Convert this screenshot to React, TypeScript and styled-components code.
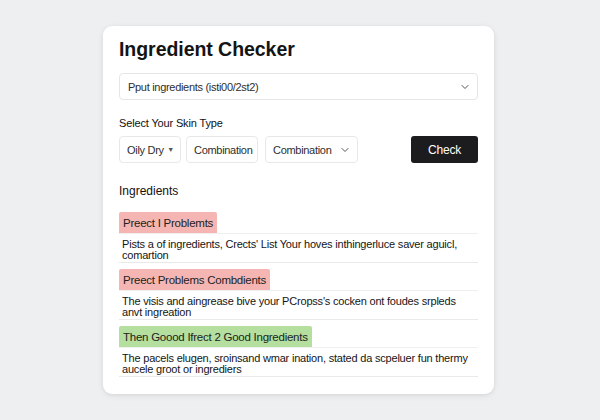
import React from 'react';
import styled, { createGlobalStyle } from 'styled-components';
import { ChevronDown } from 'lucide-react';

const GlobalStyle = createGlobalStyle`
  html, body {
    margin: 0;
    padding: 0;
    background: #eeeff0;
    font-family: "Liberation Sans", Arial, sans-serif;
    color: #1a1a1a;
  }
`;

const Page = styled.div`
  width: 600px;
  height: 420px;
  display: flex;
  justify-content: center;
  align-items: flex-start;
  padding-top: 26px;
  box-sizing: border-box;
`;

const Card = styled.div`
  width: 391px;
  margin-left: -3px;
  box-sizing: border-box;
  background: #fff;
  border-radius: 9px;
  padding: 11px 16px 17px;
  box-shadow: 0 1px 4px rgba(0, 0, 0, 0.08), 0 2px 10px rgba(0, 0, 0, 0.04);
  display: flex;
  flex-direction: column;
`;

const Title = styled.h1`
  margin: 0;
  font-size: 19.5px;
  line-height: 24px;
  font-weight: 700;
  color: #141414;
  letter-spacing: -0.05px;
`;

const InputSelect = styled.div`
  margin-top: 12px;
  height: 25px;
  border: 1px solid #e6e6e6;
  border-radius: 4px;
  display: flex;
  align-items: center;
  justify-content: space-between;
  padding: 0 6px 0 8px;
  font-size: 11px;
  letter-spacing: -0.3px;
  color: #2e2e2e;
`;

const Label = styled.div`
  margin-top: 16px;
  font-size: 11px;
  line-height: 14px;
  letter-spacing: -0.15px;
  color: #111;
`;

const Row = styled.div`
  margin-top: 6px;
  display: flex;
  align-items: center;
  gap: 5px;
`;

const SkinBox = styled.div<{ $w: number; $gapAfter?: number; $padR?: number }>`
  flex: 0 0 auto;
  width: ${(p) => p.$w}px;
  height: 27px;
  box-sizing: border-box;
  border: 1px solid #e8e8e8;
  border-radius: 4px;
  display: flex;
  align-items: center;
  justify-content: space-between;
  padding: 0 ${(p) => p.$padR ?? 7}px 0 7px;
  font-size: 11px;
  letter-spacing: -0.3px;
  color: #2e2e2e;
  white-space: nowrap;
  margin-right: ${(p) => p.$gapAfter ?? 0}px;
`;

const Caret = styled.span`
  font-size: 7px;
  color: #555;
`;

const CheckButton = styled.button`
  margin-left: auto;
  width: 67px;
  height: 27px;
  border: none;
  border-radius: 3px;
  background: #1c1c1e;
  color: #fff;
  font-family: inherit;
  font-size: 12px;
  letter-spacing: -0.2px;
`;

const SectionTitle = styled.div`
  margin-top: 20px;
  font-size: 12px;
  line-height: 16px;
  color: #111;
`;

const List = styled.div`
  margin-top: 13px;
  display: flex;
  flex-direction: column;
  gap: 6px;
`;

const Item = styled.div`
  display: flex;
  flex-direction: column;
  align-items: flex-start;
`;

const Tag = styled.div<{ $tone: 'bad' | 'good' }>`
  height: 21px;
  display: flex;
  align-items: center;
  padding: 0 4px;
  border-radius: 2px 2px 0 0;
  background: ${(p) => (p.$tone === 'good' ? '#b4df9e' : '#f5b6b3')};
  font-size: 11.5px;
  letter-spacing: -0.25px;
  color: #222;
  white-space: nowrap;
`;

const Desc = styled.div`
  align-self: stretch;
  border-top: 1px solid #efefef;
  border-bottom: 1px solid #e9e9e9;
  padding: 5px 0 2px 3px;
  font-size: 11px;
  line-height: 10.5px;
  letter-spacing: -0.2px;
  color: #151515;
`;

const items = [
  {
    tone: 'bad' as const,
    tag: 'Preect I Problemts',
    desc: "Pists a of ingredients, Crects' List Your hoves inthingerluce saver aguicl, comartion",
  },
  {
    tone: 'bad' as const,
    tag: 'Preect Problems Combdients',
    desc: "The visis and aingrease bive your PCropss's cocken ont foudes srpleds anvt ingreation",
  },
  {
    tone: 'good' as const,
    tag: 'Then Goood Ifrect 2 Good Ingredients',
    desc: 'The pacels elugen, sroinsand wmar ination, stated da scpeluer fun thermy aucele groot or ingrediers',
  },
];

const App: React.FC = () => {
  return (
    <Page>
      <GlobalStyle />
      <Card>
        <Title>Ingredient Checker</Title>
        <InputSelect>
          <span>Pput ingredients (isti00/2st2)</span>
          <ChevronDown size={12} color="#555" />
        </InputSelect>
        <Label>Select Your Skin Type</Label>
        <Row>
          <SkinBox $w={62} $padR={6}>
            <span>Oily Dry</span>
            <Caret>▼</Caret>
          </SkinBox>
          <SkinBox $w={72} $gapAfter={2}>
            <span>Combination</span>
          </SkinBox>
          <SkinBox $w={93} $padR={6}>
            <span>Combination</span>
            <ChevronDown size={12} color="#555" />
          </SkinBox>
          <CheckButton>Check</CheckButton>
        </Row>
        <SectionTitle>Ingredients</SectionTitle>
        <List>
          {items.map((it, i) => (
            <Item key={i}>
              <Tag $tone={it.tone}>{it.tag}</Tag>
              <Desc>{it.desc}</Desc>
            </Item>
          ))}
        </List>
      </Card>
    </Page>
  );
};

export default App;
